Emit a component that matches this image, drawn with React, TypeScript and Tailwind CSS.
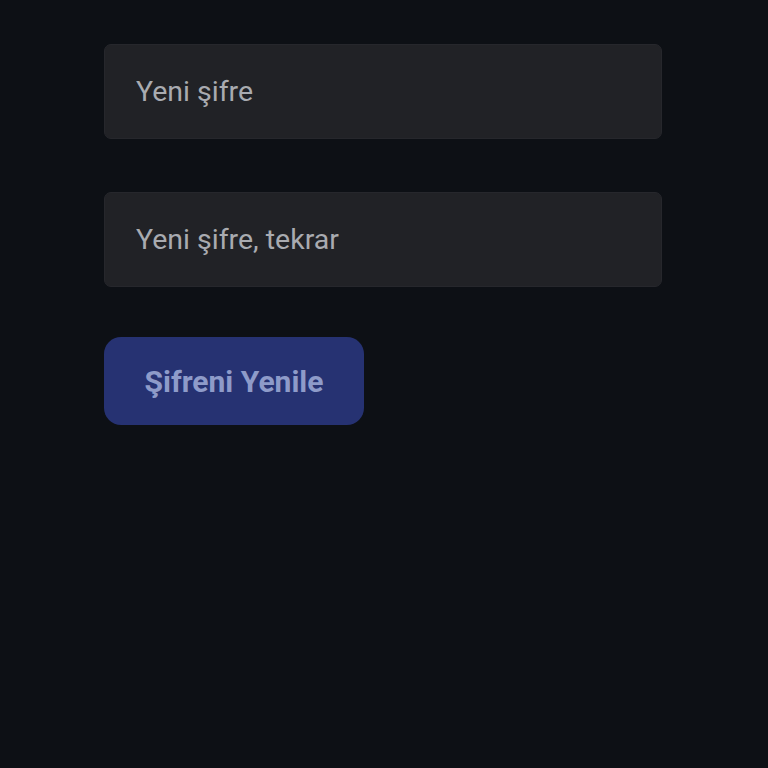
export default function App() {
	return (
		<div className="min-h-screen w-full bg-[#0d1015] font-['Roboto',sans-serif]">
			<form className="flex flex-col pl-[104px] pt-[44px] w-[662px]">
				<input
					type="password"
					placeholder="Yeni şifre"
					className="h-[95px] w-full rounded-[7px] border border-[#26272c] bg-[#212226] px-[31px] text-[28.5px] text-gray-200 placeholder:text-[#a9abb0] outline-none"
				/>
				<input
					type="password"
					placeholder="Yeni şifre, tekrar"
					className="mt-[53px] h-[95px] w-full rounded-[7px] border border-[#26272c] bg-[#212226] px-[31px] text-[28.5px] text-gray-200 placeholder:text-[#a9abb0] outline-none"
				/>
				<div className="mt-[50px]">
					<button
						type="button"
						className="h-[88px] w-[260px] rounded-[17px] bg-[#263272] text-[30px] font-bold text-[#8e9bc9]"
					>
						Şifreni Yenile
					</button>
				</div>
			</form>
		</div>
	);
}
